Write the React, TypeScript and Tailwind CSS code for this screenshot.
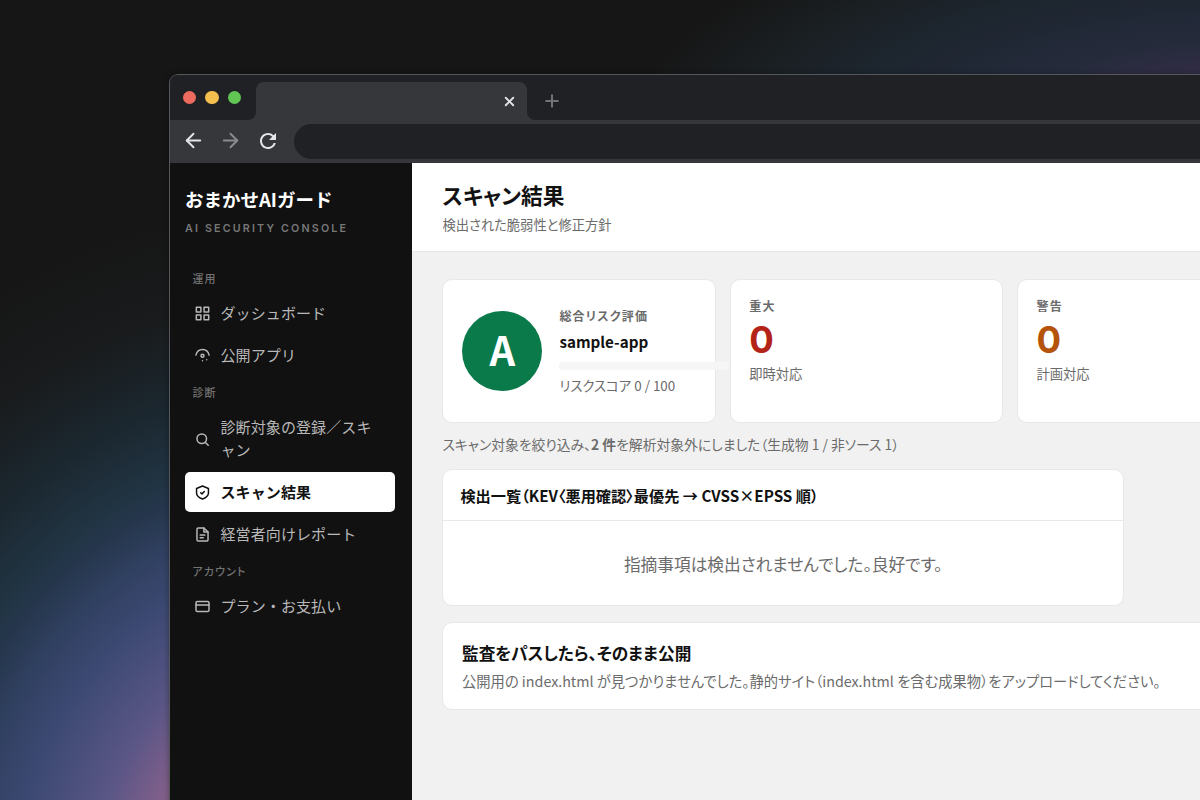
import React from 'react';
import { ArrowLeft, ArrowRight, Plus, X } from 'lucide-react';
import { MdRefresh } from 'react-icons/md';

function Icon({ children }: { children: React.ReactNode }) {
  return (
    <svg
      className="w-[17px] h-[17px] -ml-px shrink-0"
      viewBox="0 0 16 16"
      fill="none"
      stroke="currentColor"
      strokeWidth="1.4"
      strokeLinecap="round"
      strokeLinejoin="round"
    >
      {children}
    </svg>
  );
}

function DashboardIcon() {
  return (
    <Icon>
      <rect x="2.200" y="2.200" width="4.300" height="4.300" />
      <rect x="9.500" y="2.200" width="4.300" height="4.300" />
      <rect x="2.200" y="9.500" width="4.300" height="4.300" />
      <rect x="9.500" y="9.500" width="4.300" height="4.300" />
    </Icon>
  );
}

function PublishedIcon() {
  return (
    <Icon>
      <path d="M1.800 7.600C2.600 4.300 5 2.400 8 2.400s5.400 1.900 6.200 5.200" />
      <circle cx="8" cy="8.300" r="1.400" />
      <path d="M8 12.900v.1M12 11.900v.1" />
    </Icon>
  );
}

function SearchIcon() {
  return (
    <Icon>
      <circle cx="7.300" cy="7.300" r="4.500" />
      <path d="m10.600 10.600 2.800 2.800" />
    </Icon>
  );
}

function ShieldIcon() {
  return (
    <Icon>
      <path d="M8 1.900 13.600 4.200V8.400c0 2.700-2.200 4.400-5.600 5.700-3.400-1.300-5.600-3-5.600-5.700V4.200Z" />
      <path d="m6.300 8.200 1.200 1.100 2.200-2.300" />
    </Icon>
  );
}

function ReportIcon() {
  return (
    <Icon>
      <path d="M9.300 1.800H4a1.200 1.200 0 0 0-1.200 1.200v10A1.200 1.200 0 0 0 4 14.200h8a1.200 1.200 0 0 0 1.200-1.200V5.700Z" />
      <path d="M9.300 1.800v3.900h3.900M5.800 8.500h4.400M5.800 11h2.900" />
    </Icon>
  );
}

function CardIcon() {
  return (
    <Icon>
      <rect x="1.900" y="3.300" width="12.200" height="9.500" rx="1.200" />
      <path d="M1.900 6.500h12.200" />
    </Icon>
  );
}

interface NavItemProps {
  icon: React.ReactNode;
  label: string;
  active?: boolean;
}

function NavItem({ icon, label, active = false }: NavItemProps) {
  return (
    <div
      className={
        active
          ? 'flex items-center gap-[9.500px] min-h-10 px-[10px] py-[7px] rounded-[5px] bg-white text-[#111] font-bold'
          : 'flex items-center gap-[9.500px] min-h-10 px-[10px] py-[7px] rounded-[5px] text-[#b8b8b8]'
      }
    >
      {icon}
      <span className="pb-[2px] text-[15px] leading-[23px] tracking-[0.1px]">{label}</span>
    </div>
  );
}

function NavLabel({ children }: { children: React.ReactNode }) {
  return (
    <p className="px-[7.500px] text-[11px] leading-4 tracking-[1.1px] font-medium text-[#727272] [font-feature-settings:'palt']">
      {children}
    </p>
  );
}

interface StatCardProps {
  label: string;
  value: string;
  note: string;
  color: string;
}

function StatCard({ label, value, note, color }: StatCardProps) {
  return (
    <div className="relative w-[273.300px] h-[144px] shrink-0 bg-white border border-[#e8e8e8] rounded-[10px] px-[18.500px] pt-[17px]">
      <p className="text-[12px] leading-[18px] tracking-[1.2px] font-bold text-[#6b6b6b]">{label}</p>
      <p className={`font-['Inter'] text-[36.500px] leading-[40px] mt-[5px] font-bold ${color}`}>{value}</p>
      <p className="text-[13.300px] leading-5 mt-[4px] text-[#6b6b6b]">{note}</p>
    </div>
  );
}

export default function App() {
  return (
    <div className="w-[1200px] h-[800px] overflow-hidden flex pl-[169px] pt-[74px] bg-[#161616] bg-[radial-gradient(circle_at_341px_875px,#8c628c_180px,#5a5686_245px,#3c4973_320px,#304060_370px,#26374e_405px,#213443_432px,#1b272f_500px,#191b1c_585px,transparent_680px),radial-gradient(ellipse_600px_200px_at_1240px_110px,#3a3250_0%,#302c45_21%,#262b3c_34%,#212836_48%,#1d252e_65%,#1a1f22_82%,transparent_100%)] font-['Noto_Sans_CJK_JP',sans-serif]">
      {/* Browser window */}
      <div className="w-[1440px] h-[800px] shrink-0 flex flex-col overflow-hidden border border-[#56575a] border-b-0 rounded-tl-[9px] bg-[#36373b] shadow-[0_1px_6px_rgba(0,0,0,0.35)]">
        {/* Tab strip */}
        <div className="h-[45px] shrink-0 flex bg-[#36373b]">
          <div className="w-[86px] flex items-center gap-[9px] pl-[12.500px] bg-[#202124] rounded-br-[8px]">
            <span className="w-[13.500px] h-[13.500px] rounded-full bg-[#ed6a5f]" />
            <span className="w-[13.500px] h-[13.500px] rounded-full bg-[#f5bf4f]" />
            <span className="w-[13.500px] h-[13.500px] rounded-full bg-[#61c654]" />
          </div>
          <div className="w-[271px] bg-[#202124]">
            <div className="h-full mt-[7px] pb-[7px] pr-[10px] flex items-center justify-end rounded-t-[8px] bg-[#36373b]">
              <X className="w-[15px] h-[15px] text-[#e4e5e7]" strokeWidth={3} />
            </div>
          </div>
          <div className="flex-1 flex items-center pl-[15px] pt-[7px] bg-[#202124] rounded-bl-[8px]">
            <Plus className="w-5 h-5 text-[#717275]" strokeWidth={2.400} />
          </div>
        </div>

        {/* Toolbar */}
        <div className="h-[43px] shrink-0 flex items-center pl-[12px] bg-[#36373b]">
          <ArrowLeft className="w-[23px] h-[23px] mb-[2px] text-[#e4e5e7]" strokeWidth={2} />
          <ArrowRight className="w-[23px] h-[23px] mb-[2px] ml-[14px] text-[#8b8c8e]" strokeWidth={2} />
          <MdRefresh className="w-[24px] h-[24px] mb-[1px] ml-[14px] text-[#e4e5e7]" />
          <div className="flex-1 h-[35px] ml-[14px] rounded-l-full bg-[#202124]" />
        </div>

        <div className="flex-1 flex min-h-0">
          {/* Sidebar */}
          <aside className="w-[242px] shrink-0 bg-[#111111] px-[15px] pt-[22px]">
            <h1 className="text-[18.500px] leading-7 font-bold text-white">おまかせAIガード</h1>
            <p className="font-['Inter'] mt-[8px] text-[10.700px] leading-4 tracking-[2.170px] font-semibold text-[#777]">
              AI SECURITY CONSOLE
            </p>

            <nav className="w-[210px] pt-[33px]">
              <NavLabel>運用</NavLabel>
              <div className="flex flex-col gap-[2px] mt-[7px] mb-[9px]">
                <NavItem icon={<DashboardIcon />} label="ダッシュボード" />
                <NavItem icon={<PublishedIcon />} label="公開アプリ" />
              </div>
              <NavLabel>診断</NavLabel>
              <div className="flex flex-col gap-[2px] mt-[8px] mb-[9px]">
                <NavItem icon={<SearchIcon />} label="診断対象の登録／スキャン" />
                <NavItem icon={<ShieldIcon />} label="スキャン結果" active />
                <NavItem icon={<ReportIcon />} label="経営者向けレポート" />
              </div>
              <NavLabel>アカウント</NavLabel>
              <div className="flex flex-col mt-[7px]">
                <NavItem icon={<CardIcon />} label="プラン・お支払い" />
              </div>
            </nav>
          </aside>

          {/* Main */}
          <main className="flex-1 flex flex-col bg-[#f1f1f1] [font-feature-settings:'palt']">
            <header className="h-[89px] shrink-0 bg-white border-b border-[#e6e6e6] px-[30.400px] pt-[17px]">
              <h2 className="text-[21.700px] leading-[30px] font-bold text-[#111]">スキャン結果</h2>
              <p className="text-[13.300px] leading-5 mt-[5px] text-[#6b6b6b]">検出された脆弱性と修正方針</p>
            </header>

            <div className="pl-[30.400px] pt-[27px]">
              {/* Summary */}
              <div className="flex gap-[14px]">
                <div className="w-[273.300px] h-[144px] shrink-0 flex items-center gap-[17px] px-[19px] bg-white border border-[#e8e8e8] rounded-[10px]">
                  <div className="w-20 h-20 shrink-0 flex items-center justify-center pb-[4px] rounded-full bg-[#0a7a4b] text-white text-[40px] font-bold">
                    A
                  </div>
                  <div className="w-[170px] shrink-0">
                    <p className="text-[12px] leading-[18px] tracking-[1.2px] font-bold text-[#6b6b6b]">総合リスク評価</p>
                    <p className="text-[15.200px] leading-6 mt-[4px] font-bold text-[#111]">sample-app</p>
                    <div className="h-2 mt-[9px] rounded-[3px] bg-[#f6f6f6]" />
                    <p className="text-[13.400px] leading-5 mt-[5px] text-[#6b6b6b]">リスクスコア 0 / 100</p>
                  </div>
                </div>
                <StatCard label="重大" value="0" note="即時対応" color="text-[#b42318]" />
                <StatCard label="警告" value="0" note="計画対応" color="text-[#b45309]" />
              </div>

              <p className="mt-[9px] text-[13.800px] leading-6 text-[#6b6b6b]">
                スキャン対象を絞り込み、<b>2 件</b>を解析対象外にしました（生成物 1 / 非ソース 1）
              </p>

              {/* Findings */}
              <section className="w-[681.500px] h-[137px] mt-[13px] bg-white border border-[#e8e8e8] rounded-[10px]">
                <h3 className="h-[51px] flex items-center px-[17px] border-b border-[#e8e8e8] text-[15.200px] font-bold text-[#111] whitespace-pre">
                  検出一覧（KEV〈悪用確認〉最優先 → CVSS×EPSS 順）
                </h3>
                <p className="pt-[29px] text-center text-[16.700px] leading-7 text-[#6b6b6b]">
                  指摘事項は検出されませんでした。良好です。
                </p>
              </section>

              {/* Publish */}
              <section className="h-[88px] mt-[16px] px-[18.600px] pt-[16px] bg-white border border-[#e8e8e8] rounded-[10px]">
                <h3 className="text-[16.650px] leading-7 font-bold text-[#111]">監査をパスしたら、そのまま公開</h3>
                <p className="text-[14.300px] leading-6 mt-[2px] text-[#6b6b6b]">
                  公開用の index.html が見つかりませんでした。静的サイト（index.html を含む成果物）をアップロードしてください。
                </p>
              </section>
            </div>
          </main>
        </div>
      </div>
    </div>
  );
}
